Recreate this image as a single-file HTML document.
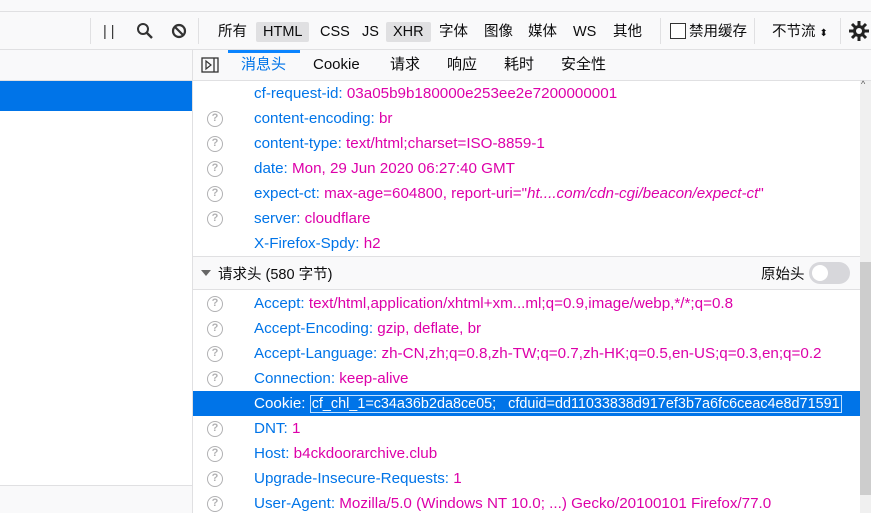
<!DOCTYPE html>
<html><head><meta charset="utf-8"><style>
*{margin:0;padding:0;box-sizing:border-box}
body{width:871px;height:513px;overflow:hidden;background:#fff;font-family:"Liberation Sans","Noto Sans CJK SC",sans-serif;font-size:14px;position:relative;color:#0c0c0d}
.a{position:absolute}
.top{left:0;top:0;width:871px;height:12px;background:#f9f9fa;border-bottom:1px solid #e0e0e2}
.tb{left:0;top:12px;width:871px;height:38px;background:#f9f9fa;border-bottom:1px solid #e0e0e2}
.t{position:absolute;top:10px;height:20px;line-height:20px;font-size:14.5px;color:#0c0c0d;white-space:nowrap}
.sel{background:#e0e0e2;border-radius:2px;padding:0 7px;}
.sep{position:absolute;top:6px;width:1px;height:26px;background:#e0e0e2}
.lh{left:0;top:50px;width:192px;height:31px;background:#f9f9fa;border-bottom:1px solid #e0e0e2}
.ls{left:0;top:81px;width:192px;height:30px;background:#0074e8}
.lb{left:0;top:485px;width:192px;height:28px;background:#f9f9fa;border-top:1px solid #e0e0e2}
.vl{left:192px;top:50px;width:1px;height:463px;background:#e0e0e2}
.rh{left:193px;top:50px;width:678px;height:31px;background:#f9f9fa;border-bottom:1px solid #e0e0e2}
.tab{position:absolute;top:2px;height:26px;line-height:26px;font-size:15px}
.row{position:absolute;left:193px;width:667px;height:25px;line-height:26px;white-space:nowrap;font-size:15.2px}
.row .k{position:absolute;left:61px;color:#0074e8}
.row .v{color:#dd00a9}
.q{position:absolute;left:14px;top:5px;width:16px;height:16px;border:1.5px solid #b1b1b3;border-radius:50%;color:#b1b1b3;font-size:11px;line-height:13px;text-align:center;font-weight:bold}
.sh{left:193px;top:256px;width:667px;height:34px;background:#f9f9fa;border-top:1px solid #e0e0e2;border-bottom:1px solid #e0e0e2;font-size:14.5px}
.sb{left:860px;top:81px;width:11px;height:432px;background:#f0f0f0}
</style></head><body>
<div class="a top"></div>
<div class="a tb">
<div class="sep" style="left:90px"></div>
<div class="t" style="left:103px;color:#333">| |</div>
<svg class="a" style="left:136px;top:10px" width="18" height="18" viewBox="0 0 18 18"><circle cx="7" cy="7" r="5" fill="none" stroke="#333" stroke-width="2"/><line x1="11" y1="11" x2="16" y2="16" stroke="#333" stroke-width="2.4"/></svg>
<svg class="a" style="left:171px;top:11px" width="16" height="16" viewBox="0 0 16 16"><circle cx="8" cy="8" r="6" fill="none" stroke="#333" stroke-width="2.2"/><line x1="4" y1="4" x2="12" y2="12" stroke="#333" stroke-width="2.2"/></svg>
<div class="sep" style="left:198px"></div>
<div class="t" style="left:218px">所有</div>
<div class="t sel" style="left:256px">HTML</div>
<div class="t" style="left:320px">CSS</div>
<div class="t" style="left:362px">JS</div>
<div class="t sel" style="left:386px">XHR</div>
<div class="t" style="left:439px">字体</div>
<div class="t" style="left:484px">图像</div>
<div class="t" style="left:528px">媒体</div>
<div class="t" style="left:573px">WS</div>
<div class="t" style="left:613px">其他</div>
<div class="sep" style="left:660px"></div>
<div class="a" style="left:670px;top:11px;width:16px;height:16px;border:1px solid #333;background:#fff"></div>
<div class="t" style="left:689px">禁用缓存</div>
<div class="sep" style="left:754px"></div>
<div class="t" style="left:772px">不节流 <span style="font-size:10px">⬍</span></div>
<div class="sep" style="left:840px"></div>
<svg class="a" style="left:848px;top:8px" width="22" height="22" viewBox="0 0 22 22"><g stroke="#222" stroke-width="3"><line x1="11" y1="1" x2="11" y2="21"/><line x1="1" y1="11" x2="21" y2="11"/><line x1="4" y1="4" x2="18" y2="18"/><line x1="18" y1="4" x2="4" y2="18"/></g><circle cx="11" cy="11" r="6" fill="#222"/><circle cx="11" cy="11" r="3" fill="#f9f9fa"/></svg>
</div>
<div class="a lh"></div>
<div class="a ls"></div>
<div class="a lb"></div>
<div class="a rh">
<svg class="a" style="left:8px;top:7px" width="18" height="16" viewBox="0 0 18 16"><rect x="1" y="1" width="16" height="14" fill="none" stroke="#333" stroke-width="1.3"/><line x1="13" y1="1" x2="13" y2="15" stroke="#333" stroke-width="1.3"/><path d="M5 4 L10 8 L5 12Z" fill="none" stroke="#333" stroke-width="1.2"/></svg>
<div class="a" style="left:35px;top:0;width:72px;height:3px;background:#0a84ff"></div>
<div class="tab" style="left:48px;color:#0074e8">消息头</div>
<div class="tab" style="left:120px">Cookie</div>
<div class="tab" style="left:197px">请求</div>
<div class="tab" style="left:254px">响应</div>
<div class="tab" style="left:311px">耗时</div>
<div class="tab" style="left:368px">安全性</div>
</div>
<div class="a vl"></div>
<div class="a sb"><div class="a" style="left:0;top:181px;width:11px;height:233px;background:#cdcdcd"></div><div class="a" style="left:1px;top:-2px;font-size:9px;color:#555">^</div></div>
<div class="row" style="top:81px"><span class="k">cf-request-id: <span class="v">03a05b9b180000e253ee2e7200000001</span></span></div>
<div class="row" style="top:106px"><span class="q">?</span><span class="k">content-encoding: <span class="v">br</span></span></div>
<div class="row" style="top:131px"><span class="q">?</span><span class="k">content-type: <span class="v">text/html;charset=ISO-8859-1</span></span></div>
<div class="row" style="top:156px"><span class="q">?</span><span class="k">date: <span class="v">Mon, 29 Jun 2020 06:27:40 GMT</span></span></div>
<div class="row" style="top:181px"><span class="q">?</span><span class="k">expect-ct: <span class="v">max-age=604800, report-uri="<i>ht....com/cdn-cgi/beacon/expect-ct</i>"</span></span></div>
<div class="row" style="top:206px"><span class="q">?</span><span class="k">server: <span class="v">cloudflare</span></span></div>
<div class="row" style="top:231px"><span class="k">X-Firefox-Spdy: <span class="v">h2</span></span></div>
<div class="a sh">
<svg class="a" style="left:8px;top:12px" width="10" height="8" viewBox="0 0 10 8"><path d="M0 1 L10 1 L5 7Z" fill="#666"/></svg>
<div class="a" style="left:25px;top:6px">请求头 (580 字节)</div>
<div class="a" style="left:568px;top:6px">原始头</div>
<div class="a" style="left:616px;top:5px;width:41px;height:22px;border-radius:11px;background:#d7d7db"><div class="a" style="left:3px;top:3px;width:16px;height:16px;border-radius:50%;background:#fff"></div></div>
</div>
<div class="row" style="top:291px"><span class="q">?</span><span class="k">Accept: <span class="v">text/html,application/xhtml+xm...ml;q=0.9,image/webp,*/*;q=0.8</span></span></div>
<div class="row" style="top:316px"><span class="q">?</span><span class="k">Accept-Encoding: <span class="v">gzip, deflate, br</span></span></div>
<div class="row" style="top:341px"><span class="q">?</span><span class="k">Accept-Language: <span class="v">zh-CN,zh;q=0.8,zh-TW;q=0.7,zh-HK;q=0.5,en-US;q=0.3,en;q=0.2</span></span></div>
<div class="row" style="top:366px"><span class="q">?</span><span class="k">Connection: <span class="v">keep-alive</span></span></div>
<div class="row" style="top:391px;background:#0074e8"><span class="k" style="color:#fff">Cookie: <span style="border:1px solid #bfe0ff;padding:0 1px;color:#fff;font-size:14.4px">cf_chl_1=c34a36b2da8ce05;&nbsp;&nbsp;&nbsp;cfduid=dd11033838d917ef3b7a6fc6ceac4e8d71591</span></span></div>
<div class="row" style="top:416px"><span class="q">?</span><span class="k">DNT: <span class="v">1</span></span></div>
<div class="row" style="top:441px"><span class="q">?</span><span class="k">Host: <span class="v">b4ckdoorarchive.club</span></span></div>
<div class="row" style="top:466px"><span class="q">?</span><span class="k">Upgrade-Insecure-Requests: <span class="v">1</span></span></div>
<div class="row" style="top:491px"><span class="q">?</span><span class="k">User-Agent: <span class="v">Mozilla/5.0 (Windows NT 10.0; ...) Gecko/20100101 Firefox/77.0</span></span></div>
</body></html>
